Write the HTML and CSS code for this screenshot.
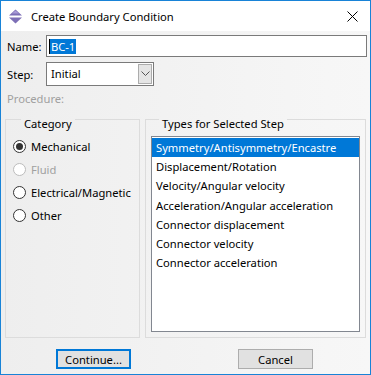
FILE: index.html
```html
<!DOCTYPE html>
<html lang="en">
<head>
    <meta charset="UTF-8">
    <title>Create Boundary Condition</title>
    <link rel="stylesheet" href="styles.css">
</head>
<body>

<div class="dialog">
    <div class="titlebar">
        <svg class="app-icon" width="15" height="15" viewBox="0 0 15 15">
            <path d="M7.5 0.5 L14 6.5 L1 6.5 Z" fill="#7d6fb6"/>
            <path d="M7.5 14.5 L14 8.5 L1 8.5 Z" fill="#7d6fb6"/>
            <path d="M4 4.5 L11 4.5 L7.5 1.5 Z" fill="#a89ad6"/>
        </svg>
        <span class="title">Create Boundary Condition</span>
        <svg class="close" width="11" height="11" viewBox="0 0 11 11">
            <path d="M0.5 0.5 L10.5 10.5 M10.5 0.5 L0.5 10.5" stroke="#000" stroke-width="1"/>
        </svg>
    </div>

    <div class="content">
        <div class="field-row">
            <span class="label">Name:</span>
            <div class="textbox"><span class="caret"></span><span class="selected">BC-1</span></div>
        </div>
        <div class="field-row step-row">
            <span class="label">Step:</span>
            <div class="combo">
                <span class="combo-text">Initial</span>
                <span class="combo-btn">
                    <svg width="9" height="6" viewBox="0 0 9 6"><path d="M0.5 0.5 L4.5 4.5 L8.5 0.5" fill="none" stroke="#555" stroke-width="1"/></svg>
                </span>
            </div>
        </div>
        <div class="procedure">Procedure:</div>

        <div class="groups">
            <fieldset class="group category">
                <legend>Category</legend>
                <div class="radio checked"><span class="dot"></span>Mechanical</div>
                <div class="radio disabled"><span class="dot"></span>Fluid</div>
                <div class="radio"><span class="dot"></span>Electrical/Magnetic</div>
                <div class="radio"><span class="dot"></span>Other</div>
            </fieldset>
            <fieldset class="group types">
                <legend>Types for Selected Step</legend>
                <ul class="listbox">
                    <li class="active">Symmetry/Antisymmetry/Encastre</li>
                    <li>Displacement/Rotation</li>
                    <li>Velocity/Angular velocity</li>
                    <li>Acceleration/Angular acceleration</li>
                    <li>Connector displacement</li>
                    <li>Connector velocity</li>
                    <li>Connector acceleration</li>
                </ul>
            </fieldset>
        </div>

        <div class="buttons">
            <button class="btn default">Continue...</button>
            <button class="btn">Cancel</button>
        </div>
    </div>
</div>

</body>
</html>
```

FILE: styles.css
```css
body {
    margin: 0;
    font-family: "Noto Sans", "Open Sans", sans-serif;
    font-size: 11.2px;
    color: #000;
}
.dialog {
    width: 371px;
    height: 375px;
    box-sizing: border-box;
    border: 1px solid #1883d7;
    display: flex;
    flex-direction: column;
    background: linear-gradient(to right, #eeeeee, #f7f7f7);
}
.titlebar {
    height: 30px;
    background: #fff;
    display: flex;
    align-items: center;
    padding: 0 8px 0 7px;
}
.app-icon {
    margin-right: 8px;
}
.title {
    flex: 1;
}
.close {
    margin-right: 4px;
}
.content {
    flex: 1;
    padding: 4px 3px 0 4px;
    display: flex;
    flex-direction: column;
}
.field-row {
    display: flex;
    align-items: center;
}
.label {
    width: 39px;
    padding-left: 2px;
}
.textbox {
    width: 318px;
    height: 20px;
    border: 1px solid #7a7a7a;
    background: #fff;
    display: flex;
    align-items: center;
    padding-left: 2px;
}
.caret {
    width: 1px;
    height: 15px;
    background: #000;
}
.selected {
    background: #0078d7;
    color: #fff;
    line-height: 15px;
    padding: 0 1px;
}
.step-row {
    margin-top: 5px;
}
.combo {
    width: 106px;
    height: 22px;
    border: 1px solid #7a7a7a;
    background: #fff;
    display: flex;
    align-items: stretch;
}
.combo-text {
    flex: 1;
    padding-left: 4px;
    line-height: 22px;
}
.combo-btn {
    width: 12px;
    margin: 1px;
    background: #e5e5e5;
    border: 1px solid #acacac;
    display: flex;
    align-items: center;
    justify-content: center;
}
.procedure {
    color: #a0a0a0;
    line-height: 16px;
    margin-top: 5px;
    padding-left: 2px;
}
.groups {
    display: flex;
    gap: 5px;
}
.group {
    margin: 0;
    min-width: 0;
    border: 1px solid #dcdcdc;
    height: 231px;
    box-sizing: border-box;
}
.group legend {
    padding: 10px 3px 0 3px;
    margin-left: 8px;
    line-height: 14px;
}
.category {
    width: 135px;
    padding: 4px 6px 0 7px;
}
.types {
    width: 221px;
    padding: 5px 5px 4px 5px;
}
.radio {
    display: flex;
    align-items: center;
    height: 23px;
    white-space: nowrap;
}
.dot {
    width: 11px;
    height: 11px;
    border: 1px solid #333;
    border-radius: 50%;
    background: #fff;
    margin-right: 5px;
    display: flex;
    align-items: center;
    justify-content: center;
}
.checked .dot::after {
    content: "";
    width: 7px;
    height: 7px;
    border-radius: 50%;
    background: #333;
}
.disabled {
    color: #a0a0a0;
}
.disabled .dot {
    border-color: #bcbcbc;
}
.listbox {
    list-style: none;
    margin: 0;
    padding: 1px 0 0 0;
    border: 1px solid #828790;
    background: #fff;
    height: 196px;
    box-sizing: border-box;
}
.listbox li {
    height: 19.2px;
    line-height: 19px;
    padding-left: 4px;
    white-space: nowrap;
}
.listbox li.active {
    background: #0078d7;
    color: #fff;
}
.buttons {
    display: flex;
    margin-top: 11px;
    padding-left: 51px;
    gap: 107px;
}
.btn {
    width: 75px;
    height: 20px;
    font-family: inherit;
    font-size: inherit;
    padding: 0;
    background: #e1e1e1;
    border: 1px solid #adadad;
    color: #000;
}
.btn.default {
    border: 2px solid #0078d7;
}
```
